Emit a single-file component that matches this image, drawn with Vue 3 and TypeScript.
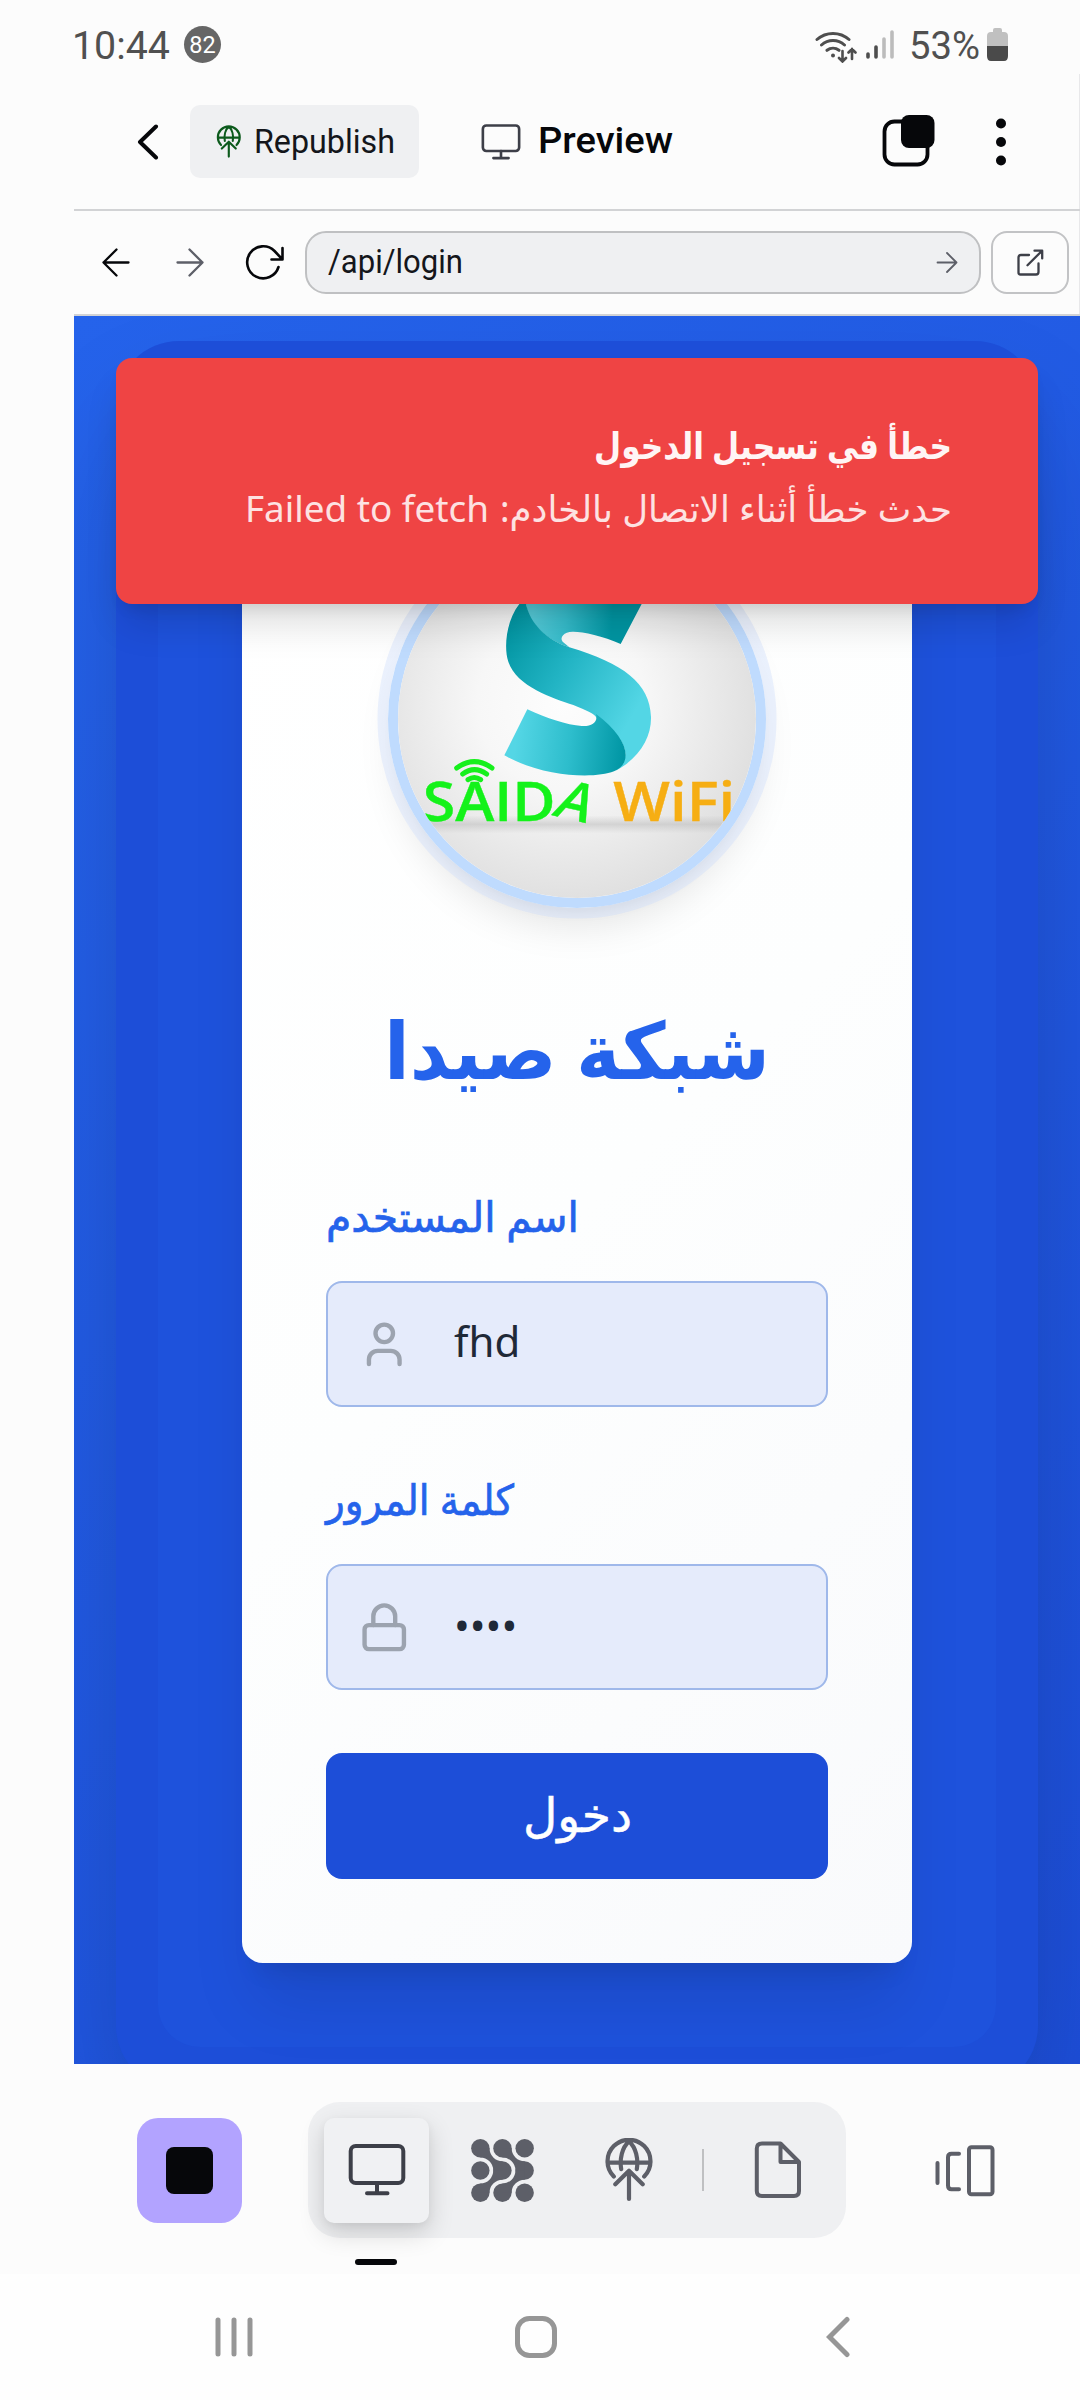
<script setup lang="ts">
import type { Directive } from 'vue'

// Condenses or expands a run of text horizontally so it occupies exactly the given width.
const vFit: Directive<HTMLElement, number> = {
  mounted(el, binding) {
    const natural = el.getBoundingClientRect().width
    if (!natural) return
    el.style.transform = `scaleX(${binding.value / natural})`
    el.style.marginRight = `${binding.value - natural}px`
  },
}

const username = 'fhd'
const password = '••••'
</script>

<template>
  <div class="screen">
    <div class="status">
      <span v-fit="98" class="fit clock">10:44</span>
      <span class="badge">82</span>
      <div class="status-right">
        <svg width="42" height="33" viewBox="0 0 42 33" fill="none" stroke="#4e4e4e" stroke-width="3" stroke-linecap="round">
          <path d="M2 9.500a24 24 0 0 1 32 0M6.500 15a17 17 0 0 1 23 0M12 20.300a10 10 0 0 1 12 0" />
          <circle cx="18" cy="25.500" r="2" fill="#4e4e4e" stroke="none" />
          <path d="M27.500 21v10M24 28l3.500 3.500 3.500-3.500M37 29V19M33.500 22.500L37 19l3.500 3.500" stroke-width="2.600" />
        </svg>
        <svg class="signal" width="28" height="30" viewBox="0 0 28 30" stroke-linecap="round" stroke-width="3.600">
          <path d="M2 24v3M10 17v10" stroke="#4e4e4e" />
          <path d="M18 9v18M26 2v25" stroke="#bcbcbc" />
        </svg>
        <span v-fit="71" class="fit clock pct">53%</span>
        <svg class="battery" width="21" height="33" viewBox="0 0 21 33">
          <path d="M6 4V2q0-2 2-2h5q2 0 2 2v2h2q4 0 4 4v10H0V8q0-4 4-4z" fill="#c0c0c0" />
          <path d="M0 18h21v10q0 5-4 5H4q-4 0-4-5z" fill="#4a4a4a" />
        </svg>
      </div>
    </div>

    <div class="app">
      <header class="bar head">
        <svg class="back" width="22" height="36" viewBox="0 0 22 36" fill="none" stroke="#06070a" stroke-width="4" stroke-linecap="round" stroke-linejoin="round">
          <path d="M19 2.500L3 18l16 15.500" />
        </svg>
        <div class="republish">
          <svg width="25.600" height="32.600" viewBox="0 0 50 64" fill="none" stroke="#0c5a1c" stroke-width="4.200" stroke-linecap="round" stroke-linejoin="round">
            <path d="M9.800 39.500A21.500 21.500 0 1 1 40.200 39.500M3.500 24.700h43M25 3.300c-7 6-9.500 18-7.800 27.800M25 3.300c7 6 9.500 18 7.800 27.800M11.300 46.300L25 32.700l13.700 13.600M25 34v28" />
          </svg>
          <span v-fit="141" class="fit plex">Republish</span>
        </div>
        <svg class="mon-sm" width="40" height="36" viewBox="0 0 58 52" fill="none" stroke="#3d3f48" stroke-width="3.800" stroke-linecap="round">
          <rect x="2.700" y="2" width="52.600" height="37" rx="5" />
          <path d="M29 39v10M18 49.300h22" />
        </svg>
        <span v-fit="135" class="fit preview">Preview</span>
        <svg class="tabs" width="54" height="54" viewBox="0 0 54 54">
          <rect x="2.500" y="7.500" width="43" height="43" rx="10" fill="none" stroke="#06070a" stroke-width="3.800" />
          <rect x="19" y="1" width="33.500" height="33" rx="8" fill="#06070a" />
        </svg>
        <svg class="dots" width="12" height="48" viewBox="0 0 12 48" fill="#06070a">
          <circle cx="6" cy="5.500" r="5" /><circle cx="6" cy="24" r="5" /><circle cx="6" cy="42.500" r="5" />
        </svg>
      </header>

      <div class="bar nav">
        <svg class="n1" width="30" height="30" viewBox="0 0 30 30" fill="none" stroke="#06070a" stroke-width="2.300" stroke-linecap="round" stroke-linejoin="round">
          <path d="M27.500 14.500H2.500M15.500 1.500l-13 13 13 13" />
        </svg>
        <svg class="n2" width="30" height="30" viewBox="0 0 30 30" fill="none" stroke="#5d5f68" stroke-width="2.300" stroke-linecap="round" stroke-linejoin="round">
          <path d="M2.500 14.500h25M14.500 1.500l13 13-13 13" />
        </svg>
        <svg class="n3" width="40" height="36" viewBox="0 0 40 36" fill="none" stroke="#06070a" stroke-width="2.600" stroke-linecap="round" stroke-linejoin="round">
          <path d="M33.500 22A16 16 0 1 1 29.500 6L37 14M37.500 3v11.500h-11" />
        </svg>
        <div class="url">
          <span v-fit="135" class="fit plex">/api/login</span>
          <svg width="22" height="22" viewBox="0 0 22 22" fill="none" stroke="#5d5f68" stroke-width="1.800" stroke-linecap="round" stroke-linejoin="round">
            <path d="M1.500 10.500h19M11 1l9.500 9.500L11 20" />
          </svg>
        </div>
        <div class="ext">
          <svg width="28" height="28" viewBox="0 0 28 28" fill="none" stroke="#3d3f48" stroke-width="2.300" stroke-linecap="round" stroke-linejoin="round">
            <path d="M13 6H5Q2.500 6 2.500 8.500v15q0 2 2 2H20q2.500 0 2.500-2.500V14.500M18.500 1.700h7.700v7.700M25.800 2L11.500 16.300" />
          </svg>
        </div>
      </div>

      <main class="page">
        <div class="outer">
          <div class="panel">
            <section class="card">
              <svg class="logo" width="358" height="358" viewBox="10 10 358 358">
                <defs>
                  <radialGradient id="bg" cx=".46" cy=".46" r=".56">
                    <stop offset="0" stop-color="#fdfdfd" /><stop offset=".4" stop-color="#f7f7f7" /><stop offset="1" stop-color="#dddddd" />
                  </radialGradient>
                  <linearGradient id="top" gradientUnits="userSpaceOnUse" x1="520" y1="60" x2="800" y2="80">
                    <stop offset="0" stop-color="#55cbd9" /><stop offset=".35" stop-color="#36bccb" /><stop offset=".85" stop-color="#0095a2" />
                  </linearGradient>
                  <linearGradient id="mid" gradientUnits="userSpaceOnUse" x1="450" y1="110" x2="840" y2="340">
                    <stop offset="0" stop-color="#0396a3" /><stop offset=".45" stop-color="#22b4c4" /><stop offset="1" stop-color="#53d6e5" />
                  </linearGradient>
                  <linearGradient id="low" gradientUnits="userSpaceOnUse" x1="470" y1="430" x2="795" y2="470">
                    <stop offset="0" stop-color="#54d6e5" /><stop offset=".5" stop-color="#2dbdcc" /><stop offset="1" stop-color="#0096a4" />
                  </linearGradient>
                  <linearGradient id="floor" x1="0" y1="0" x2="0" y2="1">
                    <stop offset="0" stop-color="#bbb" stop-opacity="0" /><stop offset=".5" stop-color="#b8b8b8" stop-opacity=".5" /><stop offset="1" stop-color="#bbb" stop-opacity="0" />
                  </linearGradient>
                </defs>
                <rect width="378" height="378" fill="url(#bg)" />
                <g transform="translate(-28 60) scale(.33333)">
                  <rect x="190" y="676" width="920" height="54" fill="url(#floor)" />
                  <path d="M520-40H890L845 42 782 162C730 138 670 125 640 125 612 124 598 142 608 155L628 172C560 150 505 100 498 42Z" fill="url(#top)" />
                  <path d="M540-20C500 10 490 22 478 42 440 90 430 170 445 215 470 290 580 325 640 345 680 362 705 370 710 385 780 430 810 480 790 515 784 528 775 537 765 543 840 505 875 440 873 380 870 280 790 220 628 172 560 150 510 100 498 42Z" fill="url(#mid)" />
                  <path d="M502 358C560 385 620 405 665 408 695 410 715 398 708 372 780 425 808 480 793 515 787 530 775 539 762 544 700 568 545 560 433 496Z" fill="url(#low)" />
                  <g fill="none" stroke="#16f01c" stroke-linecap="round" stroke-width="15">
                    <path d="M290 534q53-38 106 0M308 552q35-26 72 0M324 569q19-13 38 0" />
                  </g>
                  <g class="brand">
                    <text x="188" y="693" textLength="399" lengthAdjust="spacingAndGlyphs" fill="#14f21a" stroke="#14f21a">SAID</text>
                    <text transform="translate(574 675) rotate(13) skewX(-12)" fill="#14f21a" stroke="#14f21a">A</text>
                    <text x="760" y="692" textLength="366" lengthAdjust="spacingAndGlyphs" fill="#f6ae13" stroke="#f6ae13">WiFi</text>
                  </g>
                </g>
              </svg>

              <h1><span v-fit="386" class="fit" dir="rtl">شبكة صيدا</span></h1>

              <label class="l1"><span v-fit="253" class="fit" dir="rtl">اسم المستخدم</span></label>
              <div class="field">
                <svg width="52.500" height="52.500" viewBox="0 0 24 24" fill="none" stroke="#9ca3af" stroke-width="2" stroke-linecap="round" stroke-linejoin="round">
                  <path d="M19 21v-2a4 4 0 0 0-4-4H9a4 4 0 0 0-4 4v2" /><circle cx="12" cy="7" r="4" />
                </svg>
                <span>{{ username }}</span>
              </div>

              <label class="l2"><span v-fit="188" class="fit" dir="rtl">كلمة المرور</span></label>
              <div class="field">
                <svg width="52.500" height="52.500" viewBox="0 0 24 24" fill="none" stroke="#9ca3af" stroke-width="2" stroke-linecap="round" stroke-linejoin="round">
                  <rect x="3" y="11" width="18" height="11" rx="2" /><path d="M7 11V7a5 5 0 0 1 10 0v4" />
                </svg>
                <span class="pw">{{ password }}</span>
              </div>

              <button type="button"><span v-fit="109" class="fit" dir="rtl">دخول</span></button>
            </section>
          </div>
        </div>

        <div class="toast">
          <div class="trow title"><span v-fit="358" class="fit" dir="rtl">خطأ في تسجيل الدخول</span></div>
          <div class="trow desc">
            <span v-fit="244" class="fit">Failed to fetch</span>
            <span v-fit="452" class="fit" dir="rtl">حدث خطأ أثناء الاتصال بالخادم:</span>
          </div>
        </div>
      </main>

      <footer class="dock">
        <div class="stop"><i /></div>
        <div class="pill">
          <div class="sel">
            <svg width="58" height="52" viewBox="0 0 58 52" fill="none" stroke="#3d3f48" stroke-width="4" stroke-linecap="round">
              <rect x="2.700" y="2" width="52.600" height="37" rx="5" />
              <path d="M29 39v10M19 49.300h20.500" />
            </svg>
            <b class="mark" />
          </div>
          <svg class="p2" width="63" height="63" viewBox="0 0 62.700 63" fill="#5d5f68">
            <g>
              <circle cx="9.200" cy="9.300" r="9.200" /><circle cx="31.300" cy="9.300" r="9.200" /><circle cx="53.500" cy="9.300" r="9.200" />
              <circle cx="9.200" cy="31.500" r="9.200" /><circle cx="31.300" cy="31.500" r="9.200" /><circle cx="53.500" cy="31.500" r="9.200" />
              <circle cx="9.200" cy="53.700" r="9.200" /><circle cx="31.300" cy="53.700" r="9.200" /><circle cx="53.500" cy="53.700" r="9.200" />
            </g>
            <path d="M18.400 9.300A12.900 13 0 0 0 31.300 22.300V31.500H22.100A12.900 13 0 0 0 9.200 18.500V9.300Z" />
            <path d="M40.500 9.300A13 13 0 0 0 53.500 22.300V31.500H44.300A13 13 0 0 0 31.300 18.500V9.300Z" />
            <g transform="matrix(1 0 0 -1 0 63)">
              <path d="M18.400 9.300A12.900 13 0 0 0 31.300 22.300V31.500H22.100A12.900 13 0 0 0 9.200 18.500V9.300Z" />
              <path d="M40.500 9.300A13 13 0 0 0 53.500 22.300V31.500H44.300A13 13 0 0 0 31.300 18.500V9.300Z" />
            </g>
          </svg>
          <svg class="p3" width="50" height="64" viewBox="0 0 50 64" fill="none" stroke="#5d5f68" stroke-width="4.200" stroke-linecap="round" stroke-linejoin="round">
            <path d="M9.800 38.500A21.500 21.500 0 1 1 40.200 38.500M3.500 24.700h43M25 3.300c-7 6-9.500 18-7.800 27.800M25 3.300c7 6 9.500 18 7.800 27.800M11.300 46.300L25 32.700l13.700 13.600M25 34v27" />
          </svg>
          <i class="sep" />
          <svg class="p4" width="48" height="58" viewBox="0 0 48 58" fill="none" stroke="#5d5f68" stroke-width="4" stroke-linejoin="round">
            <path d="M26.500 2.500H8Q2.800 2.500 2.800 7.500V50q0 5 5 5H40q5 0 5-5V21L26.500 2.500V21H45" />
          </svg>
        </div>
        <svg class="panes" width="60" height="52" viewBox="0 0 60 52" fill="none" stroke="#5d5f68" stroke-width="4" stroke-linecap="round" stroke-linejoin="round">
          <path d="M2.500 18v20M24 8.700H16.500Q13 8.700 13 12.200V40.500Q13 44.300 16.500 44.300H24" />
          <rect x="34" y="2.300" width="23.500" height="47" rx="2.500" />
        </svg>
      </footer>
    </div>

    <div class="sysnav">
      <svg width="38" height="42" viewBox="0 0 38 42" stroke="#969696" stroke-width="5" stroke-linecap="round"><path d="M3 4v34M19 4v34M35 4v34" /></svg>
      <svg class="home" width="42" height="42" viewBox="0 0 42 42" fill="none" stroke="#969696" stroke-width="5"><rect x="2.500" y="2.500" width="37" height="37" rx="12" /></svg>
      <svg class="sback" width="24" height="42" viewBox="0 0 24 42" fill="none" stroke="#969696" stroke-width="5" stroke-linecap="round"><path d="M21 3.500L3.500 21 21 38.500" /></svg>
    </div>
  </div>
</template>

<style>
body {
  background: #fcfcfc;
}
</style>

<style scoped>
* {
  box-sizing: border-box;
}
svg {
  display: block;
  flex: none;
}
.screen {
  width: 1080px;
  height: 2400px;
  overflow: hidden;
  background: #fcfcfc;
  font-family: "Noto Sans", "DejaVu Sans", sans-serif;
}
.fit {
  display: inline-block;
  flex: none;
  white-space: nowrap;
  transform-origin: 0 50%;
}
.status {
  display: flex;
  align-items: center;
  height: 74px;
  padding: 18px 72px 0 72px;
  font-family: Roboto, sans-serif;
}
.clock {
  font-size: 39.500px;
  line-height: 46px;
  color: #505050;
}
.badge {
  width: 37px;
  height: 37px;
  margin: -3px 0 0 14px;
  border-radius: 50%;
  background: #666;
  color: #fff;
  font-size: 23.500px;
  line-height: 39px;
  text-align: center;
}
.status-right {
  display: flex;
  align-items: center;
  margin-left: auto;
}
.signal {
  margin: -2px 0 0 9px;
}
.pct {
  margin-left: 15px;
}
.battery {
  margin: -3px 0 0 7px;
}
.app {
  margin-left: 74px;
}
.bar {
  display: flex;
  align-items: center;
  border-bottom: 2px solid #d2d3d5;
  box-shadow: inset -1px 0 #e8e8ea;
}
.head {
  height: 137px;
}
.back {
  margin-left: 63px;
}
.republish {
  display: flex;
  align-items: center;
  width: 229px;
  height: 73px;
  margin-left: 31px;
  padding-left: 26px;
  border-radius: 10px;
  background: #eff0f2;
}
.plex {
  font-family: Roboto, sans-serif;
  font-size: 32.500px;
  line-height: 40px;
  color: #14161b;
}
.republish .plex {
  margin-left: 12.400px;
}
.mon-sm {
  margin-left: 61.500px;
}
.preview {
  margin: -1px 0 0 17.500px;
  font-family: Roboto, sans-serif;
  font-size: 36px;
  font-weight: 500;
  line-height: 42px;
  color: #06070a;
}
.tabs {
  margin: -1px 0 0 208.500px;
}
.dots {
  margin-left: 59.500px;
}
.nav {
  height: 105px;
}
.n1 {
  margin-left: 27px;
}
.n2 {
  margin-left: 44px;
}
.n3 {
  margin-left: 40px;
}
.url {
  display: flex;
  align-items: center;
  justify-content: space-between;
  width: 676px;
  height: 63px;
  margin-left: 20px;
  padding: 0 21px 0 21px;
  border: 2px solid #bfc0c2;
  border-radius: 21px;
  background: #eff0f2;
}
.url .plex {
  margin-top: -2px;
}
.ext {
  display: flex;
  align-items: center;
  justify-content: center;
  width: 78px;
  height: 63px;
  margin-left: 10px;
  border: 2px solid #c2c3c5;
  border-radius: 16px;
}
.page {
  position: relative;
  height: 1748px;
  padding: 25px 42px 0;
  overflow: hidden;
  background: linear-gradient(135deg, #2563eb, #1d4ed8);
}
.outer {
  height: 1748px;
  padding: 42px;
  border-radius: 63px;
  background: #1d4ed8;
  box-shadow: 0 66px 131px -31px rgba(0, 0, 0, 0.25);
}
.panel {
  height: 1664px;
  padding: 84px;
  border-radius: 42px;
  background: #1e52dc;
}
.card {
  display: flex;
  flex-direction: column;
  width: 670px;
  height: 1496px;
  padding: 63px 84px 84px;
  border-radius: 21px;
  background: linear-gradient(135deg, #fff, #fdfefe 50%, #f9fafc);
  box-shadow: 0 52px 66px -13px rgba(0, 0, 0, 0.1), 0 21px 26px -16px rgba(0, 0, 0, 0.1);
}
.logo {
  box-sizing: content-box;
  align-self: center;
  border: 10px solid #bfdbfe;
  border-radius: 50%;
  box-shadow: 0 0 0 10.500px rgba(205, 221, 252, 0.38), 0 26px 39px -8px rgba(0, 0, 0, 0.1), 0 10px 16px -10px rgba(0, 0, 0, 0.1);
}
.brand {
  font-family: "Open Sans", sans-serif;
  font-size: 160px;
  font-weight: 600;
  stroke-width: 1;
}
h1 {
  display: flex;
  justify-content: center;
  height: 94px;
  margin: 92px 0 0;
  font-size: 78.750px;
  font-weight: 700;
  line-height: 98px;
  color: #2563eb;
}
label {
  display: flex;
  height: 60px;
  margin-bottom: 36px;
  font-size: 42px;
  font-weight: 500;
  line-height: 62px;
  color: #2563eb;
  -webkit-text-stroke: 0.7px #2563eb;
}
.l1 {
  margin-top: 91px;
}
.l2 {
  margin-top: 61px;
}
.field {
  display: flex;
  align-items: center;
  width: 502px;
  height: 126px;
  padding-left: 30px;
  border: 2px solid #9fb8ea;
  border-radius: 16px;
  background: #e5ebfb;
  font-size: 42px;
  line-height: 60px;
  color: #1f2937;
}
.field span {
  margin: -6px 0 0 43.500px;
}
.field .pw {
  margin-top: -4px;
}
button {
  display: flex;
  justify-content: center;
  width: 502px;
  height: 126px;
  margin-top: 63px;
  padding: 31px 0 0;
  border: 0;
  border-radius: 16px;
  background: #1d4ed8;
  color: #fff;
  font-family: inherit;
  font-size: 47px;
  font-weight: 400;
  line-height: 60px;
  -webkit-text-stroke: 0.5px #fff;
}
.toast {
  position: absolute;
  top: 42px;
  left: 42px;
  width: 922px;
  height: 246px;
  padding: 59px 86px 0;
  border-radius: 16px;
  background: #ef4444;
  box-shadow: 0 26px 39px -8px rgba(0, 0, 0, 0.14), 0 10px 16px -8px rgba(0, 0, 0, 0.12);
}
.trow {
  display: flex;
  justify-content: flex-end;
  height: 56px;
  font-size: 36.750px;
  line-height: 56px;
}
.title {
  font-weight: 600;
  color: #fff5f5;
}
.desc {
  gap: 11px;
  margin-top: 7px;
  color: #fde2e2;
}
.dock {
  display: flex;
  align-items: center;
  height: 210px;
  padding: 3px 0 0 63px;
}
.stop {
  display: flex;
  align-items: center;
  justify-content: center;
  width: 105px;
  height: 105px;
  border-radius: 21px;
  background: #b2a3ff;
}
.stop i {
  width: 47px;
  height: 47px;
  border-radius: 8px;
  background: #06070a;
}
.pill {
  display: flex;
  align-items: center;
  width: 538px;
  height: 136px;
  margin: -1px 0 0 66px;
  padding-left: 16px;
  border-radius: 32px;
  background: #eff0f2;
}
.sel {
  position: relative;
  display: flex;
  align-items: center;
  justify-content: center;
  width: 105px;
  height: 105px;
  border-radius: 10px;
  background: #f0f1f3;
  box-shadow: 0 10px 26px rgba(0, 0, 0, 0.16), 0 3px 8px rgba(0, 0, 0, 0.05);
}
.mark {
  position: absolute;
  left: 31px;
  top: 141px;
  width: 42px;
  height: 6px;
  border-radius: 3px;
  background: #06070a;
}
.p2 {
  margin-left: 42px;
}
.p3 {
  margin-left: 69.500px;
}
.sep {
  width: 2px;
  height: 42px;
  margin-left: 48.500px;
  background: #bfc0c2;
}
.p4 {
  margin-left: 50px;
}
.panes {
  margin-left: 89px;
}
.sysnav {
  display: flex;
  align-items: center;
  height: 126px;
  padding-left: 215px;
  background: #fefefe;
}
.home {
  margin-left: 262px;
}
.sback {
  margin-left: 269px;
}
</style>
